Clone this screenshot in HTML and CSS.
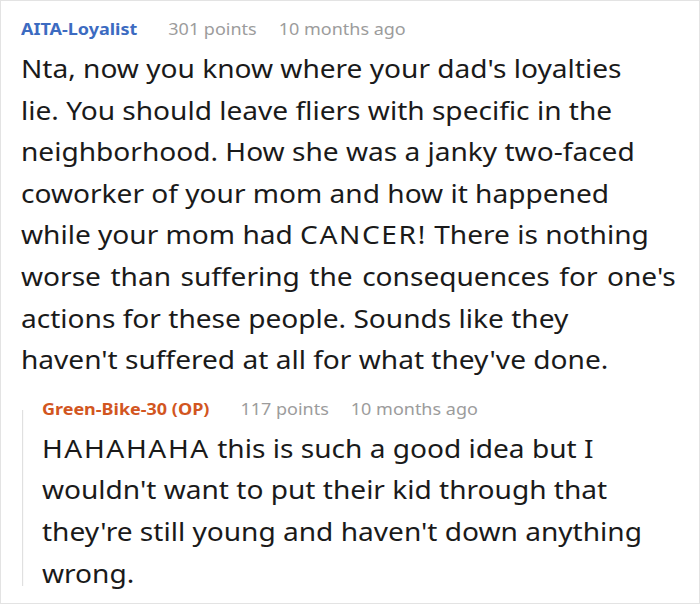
FILE: index.html
```html
<!DOCTYPE html>
<html>
<head>
<meta charset="utf-8">
<link rel="stylesheet" href="styles.css">
</head>
<body>
<div class="frame">
  <div class="comment">
    <div class="meta">
      <span class="author">AITA-Loyalist</span>
      <span class="points">301 points</span>
      <span class="time">10 months ago</span>
    </div>
    <p class="text">Nta, now you know where your dad's loyalties<br>lie. You should leave fliers with specific in the<br>neighborhood. How she was a janky two-faced<br>coworker of your mom and how it happened<br>while your mom had <span class="caps">CANCER!</span> There is nothing<br><span class="wide">worse than suffering the consequences for one's</span><br>actions for these people. Sounds like they<br>haven't suffered at all for what they've done.</p>
    <div class="reply">
      <div class="rule"></div>
      <div class="reply-body">
        <div class="meta">
          <span class="author op">Green-Bike-30 (OP)</span>
          <span class="points">117 points</span>
          <span class="time">10 months ago</span>
        </div>
        <p class="text"><span class="caps">HAHAHAHA</span> this is such a good idea but I<br>wouldn't want to put their kid through that<br>they're still young and haven't down anything<br>wrong.</p>
      </div>
    </div>
  </div>
</div>
</body>
</html>
```
FILE: styles.css
```css
html, body {
  margin: 0;
  padding: 0;
  background: #ffffff;
}
.frame {
  box-sizing: border-box;
  width: 700px;
  height: 604px;
  border: 1px solid #e3e3e3;
  padding: 17px 0 0 20px;
  font-family: "Noto Sans", sans-serif;
  overflow: hidden;
}
.comment {
  width: 630px;
  transform: scaleX(1.08);
  transform-origin: left top;
}
.meta {
  display: flex;
  align-items: baseline;
  font-size: 16.67px;
  line-height: 22px;
  white-space: nowrap;
}
.author {
  font-weight: bold;
  color: #3c6bc1;
}
.author.op {
  color: #d2561f;
}
.points {
  color: #9c9c9c;
  margin-left: 28.7px;
}
.time {
  color: #9c9c9c;
  margin-left: 20.4px;
}
.text {
  margin: 8px 0 0;
  font-size: 26px;
  line-height: 1.6;
  color: #1a1a1a;
  white-space: nowrap;
}
.caps {
  letter-spacing: 1.5px;
}
.wide {
  word-spacing: 2px;
}
.reply {
  display: flex;
  margin-top: 17px;
}
.rule {
  flex: none;
  width: 1px;
  margin: 12px 0 8px 1px;
  background: #dedede;
}
.reply-body {
  padding-left: 17.4px;
}
```
